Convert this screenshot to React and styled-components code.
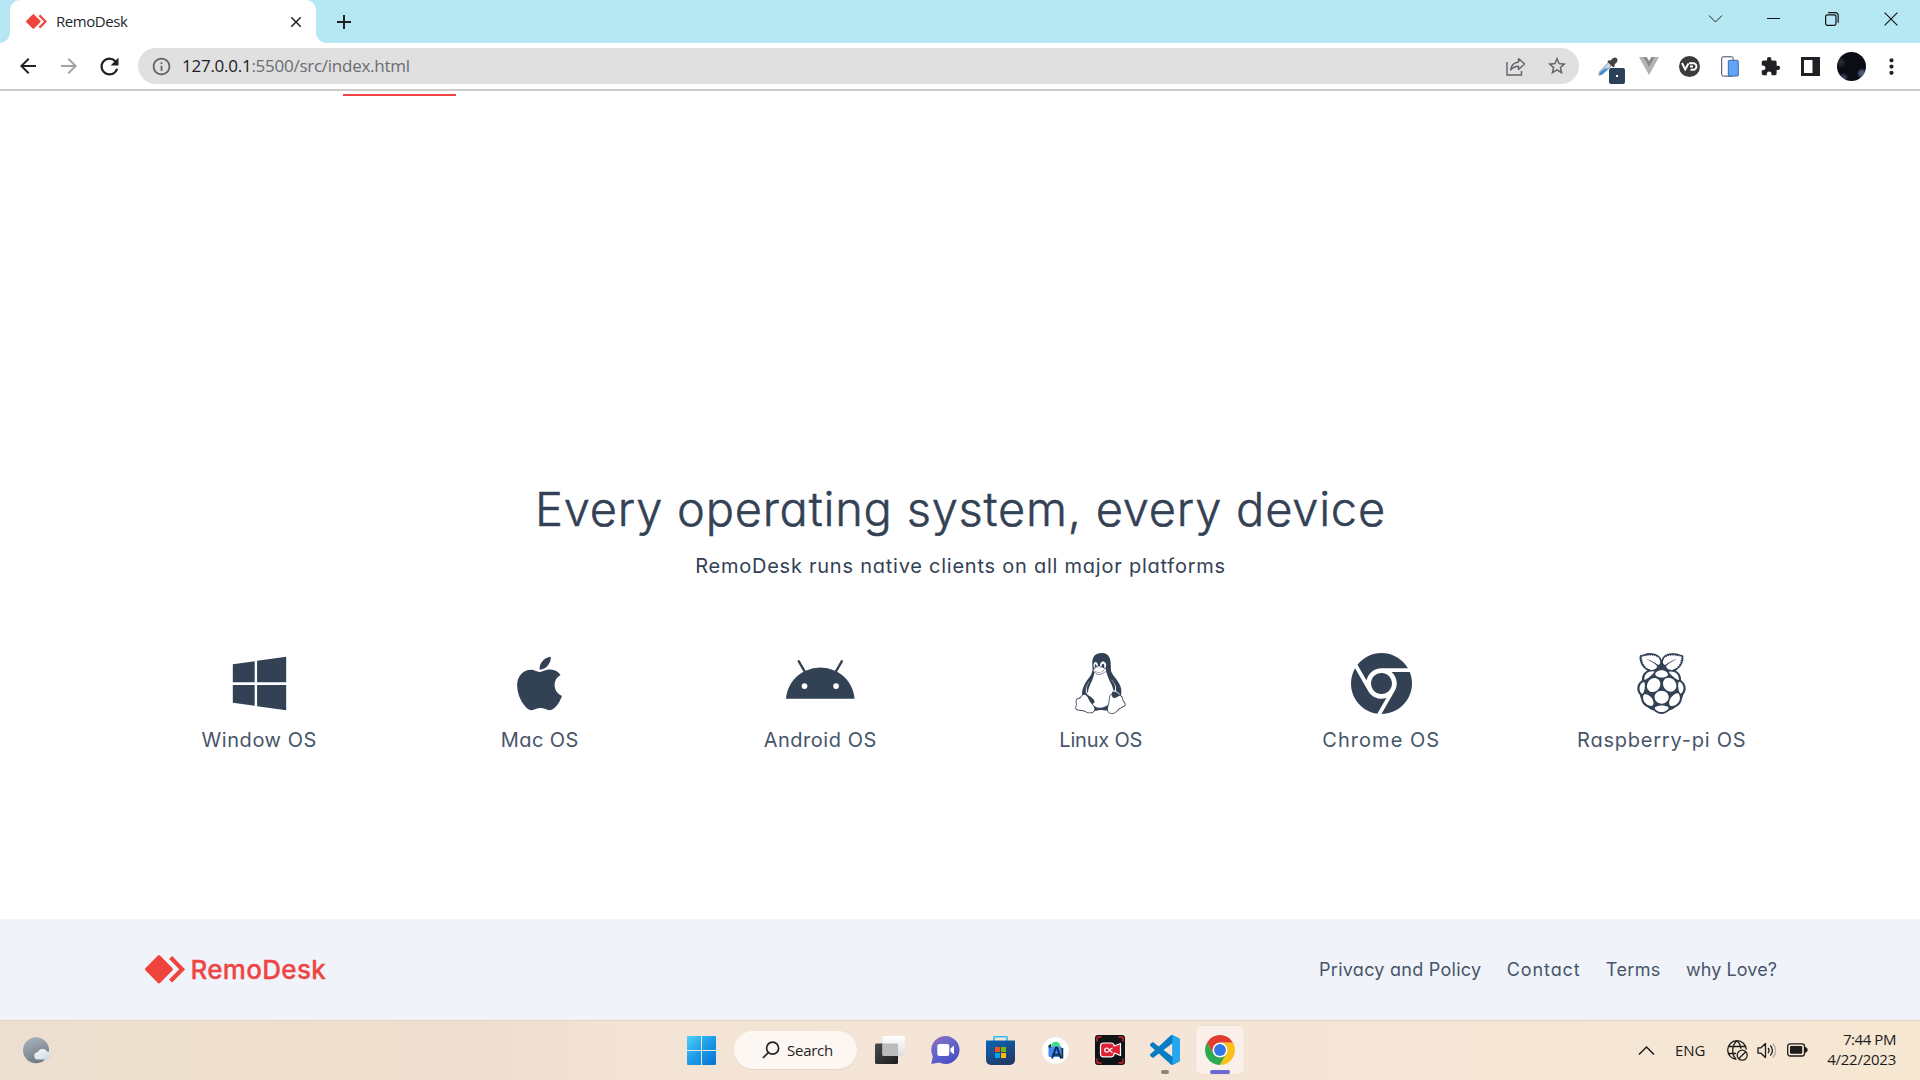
import React from "react";
import styled, { createGlobalStyle } from "styled-components";
import { FaWindows, FaApple, FaAndroid, FaLinux, FaChrome, FaRaspberryPi } from "react-icons/fa6";
import { MdArrowBack, MdArrowForward, MdRefresh, MdInfoOutline, MdStarBorder, MdExtension, MdMoreVert, MdClose, MdAdd } from "react-icons/md";

const GlobalStyle = createGlobalStyle`
  * { box-sizing: border-box; }
  body { margin: 0; background: #fff; }
  svg { display: block; flex: none; }
`;

const SYSTEM = `"Open Sans", "Noto Sans", sans-serif`;
const BRAND = `Inter, "Open Sans", sans-serif`;

const Screen = styled.div`
  width: 1920px;
  height: 1080px;
  display: flex;
  flex-direction: column;
  overflow: hidden;
  font-family: ${SYSTEM};
`;

/* ---------- browser chrome ---------- */
const TabStrip = styled.header`
  height: 43px;
  display: flex;
  background: #b5e8f3;
`;
const Tab = styled.div`
  position: relative;
  width: 306px;
  margin-left: 10px;
  padding: 0 11px 0 16px;
  display: flex;
  align-items: center;
  background: #fff;
  border-radius: 10px 10px 0 0;
  &::before, &::after {
    content: "";
    position: absolute;
    bottom: 0;
    width: 10px;
    height: 10px;
  }
  &::before { left: -10px; background: radial-gradient(circle at 0 0, transparent 9.5px, #fff 10px); }
  &::after { right: -10px; background: radial-gradient(circle at 100% 0, transparent 9.5px, #fff 10px); }
`;
const TabTitle = styled.span`
  flex: 1;
  margin-left: 9px;
  padding-bottom: 2px;
  font-size: 15px;
  line-height: 20px;
  letter-spacing: -0.43px;
  color: #23272b;
`;
const NewTab = styled.div`
  width: 56px;
  display: flex;
  align-items: center;
  justify-content: center;
`;
const WindowButtons = styled.div`
  margin-left: auto;
  height: 37px;
  display: flex;
`;
const WindowButton = styled.div`
  width: 58.5px;
  display: flex;
  align-items: center;
  justify-content: center;
`;
const Toolbar = styled.div`
  height: 48px;
  display: flex;
  align-items: center;
  border-bottom: 2px solid #cbcbcb;
  background: #fff;
`;
const NavButtons = styled.div`
  width: 138px;
  padding-left: 8px;
  display: flex;
`;
const Slot = styled.div`
  position: relative;
  width: 40.5px;
  height: 36px;
  display: flex;
  align-items: center;
  justify-content: center;
  color: ${(p) => p.$tone || "#202124"};
`;
const Omnibox = styled.div`
  width: 1441px;
  height: 36px;
  padding: 0 2px 0 13px;
  display: flex;
  align-items: center;
  border-radius: 18px;
  background: #e0e0e0;
  color: #5f6368;
`;
const Url = styled.span`
  flex: 1;
  margin-left: 10px;
  font-size: 17px;
  line-height: 24px;
  letter-spacing: -0.26px;
  color: #6a6d71;
`;
const Host = styled.span`
  color: #202124;
`;
const Extensions = styled.div`
  margin-left: 9px;
  display: flex;
`;
const Badge = styled.div`
  position: absolute;
  left: 21px;
  top: 20px;
  width: 16px;
  height: 16px;
  display: flex;
  align-items: center;
  justify-content: center;
  border-radius: 2px;
  background: #2b4159;
  &::after { content: ""; width: 2px; height: 2px; background: #fff; }
`;
const Disc = styled.div`
  width: 21px;
  height: 21px;
  display: flex;
  align-items: center;
  justify-content: center;
  border-radius: 50%;
  background: #3b3b3b;
  color: #fff;
`;
const Avatar = styled.div`
  width: 29px;
  height: 29px;
  border-radius: 50%;
  background:
    radial-gradient(circle at 86% 74%, #4b5878 0 7%, transparent 16%),
    radial-gradient(circle at 22% 88%, #343c55 0 6%, transparent 14%),
    radial-gradient(circle at 12% 36%, #262838 0 6%, transparent 18%),
    #0c0c14;
`;

/* ---------- web page ---------- */
const Page = styled.main`
  height: 828px;
  display: flex;
  flex-direction: column;
  font-family: ${BRAND};
  font-feature-settings: "cv11";
  color: #334155;
`;
const ActiveLine = styled.div`
  width: 113px;
  height: 2px;
  margin: 3px 0 0 343px;
  flex: none;
  background: #ef4444;
`;
const Systems = styled.section`
  margin-top: 377px;
  padding-left: 1px;
  display: flex;
  flex-direction: column;
  align-items: center;
`;
const Heading = styled.h1`
  margin: 0;
  font-size: 47px;
  font-weight: 300;
  line-height: 72px;
  letter-spacing: 0.76px;
  -webkit-text-stroke: 0.5px #334155;
`;
const Lead = styled.p`
  margin: 6px 0 0;
  font-size: 20px;
  font-weight: 380;
  line-height: 30px;
  letter-spacing: 0.76px;
`;
const SystemGrid = styled.div`
  width: 1683px;
  margin-top: 72px;
  display: grid;
  grid-template-columns: repeat(6, 1fr);
`;
const SystemCard = styled.div`
  display: flex;
  flex-direction: column;
  align-items: center;
  svg { width: ${(p) => p.$iconWidth || 61}px; height: 61px; }
`;
const SystemName = styled.span`
  margin-top: 11px;
  font-size: 20px;
  font-weight: 370;
  line-height: 30px;
  letter-spacing: ${(p) => p.$track}px;
  color: #475569;
`;
const Footer = styled.footer`
  height: 101px;
  padding: 0 143px 0 145px;
  display: flex;
  align-items: center;
  justify-content: space-between;
  background: #f0f3f9;
  font-family: ${BRAND};
  font-feature-settings: "cv11";
`;
const Brand = styled.div`
  display: flex;
  align-items: center;
  gap: 5.5px;
  color: #ef4444;
`;
const BrandName = styled.span`
  font-size: 26px;
  font-weight: 500;
  line-height: 36px;
  letter-spacing: 0.3px;
  -webkit-text-stroke: 0.3px #ef4444;
`;
const Links = styled.nav`
  display: flex;
  gap: 25.2px;
`;
const Link = styled.a`
  font-size: 18px;
  font-weight: 370;
  line-height: 28px;
  letter-spacing: ${(p) => p.$track}px;
  color: #475569;
`;

/* ---------- taskbar ---------- */
const Taskbar = styled.div`
  height: 60px;
  padding-bottom: 1px;
  display: grid;
  grid-template-columns: 677.5px auto 1fr;
  border-top: 1px solid #e3d3c2;
  background: linear-gradient(90deg, #eddfd0 0, #efe0cd 230px, #eddecf 470px, #f4e4d5 640px, #f4e5d6 1300px, #f6e6d5 1640px, #f6e7d2 1920px);
`;
const Weather = styled.div`
  padding-left: 23px;
  display: flex;
  align-items: center;
`;
const Apps = styled.div`
  display: flex;
  align-items: center;
  gap: 7px;
`;
const AppButton = styled.div`
  position: relative;
  width: 48px;
  height: 48px;
  display: flex;
  align-items: center;
  justify-content: center;
  border-radius: 5px;
  background: ${(p) => (p.$active ? "#faf0e9" : "transparent")};
  box-shadow: ${(p) => (p.$active ? "0 0 0 1px #eedfd1" : "none")};
`;
const Indicator = styled.div`
  position: absolute;
  left: 50%;
  bottom: 0;
  width: ${(p) => p.$width}px;
  height: 4px;
  margin-left: -${(p) => p.$width / 2}px;
  border-radius: 2px;
  background: ${(p) => p.$tone};
`;
const SearchPill = styled.div`
  width: 123px;
  height: 38px;
  padding-left: 28px;
  margin: 0 2px 0 1.5px;
  display: flex;
  align-items: center;
  gap: 7px;
  border-radius: 19px;
  background: #fcf7f2;
  box-shadow: 0 1px 1px #e4d6c7;
`;
const SearchLabel = styled.span`
  padding-bottom: 1px;
  font-size: 15px;
  line-height: 20px;
  letter-spacing: -0.26px;
  color: #1f1f1f;
`;
const Tray = styled.div`
  padding-right: 24px;
  display: flex;
  align-items: center;
  justify-content: flex-end;
  color: #1b1b1b;
`;
const TrayIcons = styled.div`
  margin: 0 19px 0 22px;
  display: flex;
  align-items: center;
  gap: 9px;
`;
const Language = styled.span`
  margin-left: 20px;
  padding-bottom: 1px;
  font-size: 15px;
  line-height: 20px;
  letter-spacing: -0.1px;
`;
const Clock = styled.div`
  padding-bottom: 3px;
  display: flex;
  flex-direction: column;
  align-items: flex-end;
  font-size: 15px;
  line-height: 20px;
`;
const ClockLine = styled.span`
  letter-spacing: ${(p) => p.$track}px;
`;

/* ---------- drawings ---------- */
const Logo = ({ width, height }) => (
  <svg width={width} height={height} viewBox="0 0 40 28.6" fill="#ef443b">
    <path d="M12.7.8a1.8 1.8 0 0 1 2.6 0l12 12.2a1.8 1.8 0 0 1 0 2.6l-12 12.2a1.8 1.8 0 0 1-2.6 0L.6 15.6a1.8 1.8 0 0 1 0-2.6Z" />
    <path d="M25.6 2.6 37.2 14.3 25.6 26" fill="none" stroke="#ef443b" strokeWidth="4.2" />
  </svg>
);
const ChevronDown = () => (
  <svg width="15" height="10" viewBox="0 0 15 10" fill="none" stroke="#222" strokeWidth="1"><path d="m1 1.5 6.5 6.5L14 1.5" /></svg>
);
const Minimize = () => (
  <svg width="13" height="13" viewBox="0 0 13 13"><path d="M0 6.5h13" stroke="#111" strokeWidth="1" /></svg>
);
const Restore = () => (
  <svg width="14" height="14" viewBox="0 0 14 14" fill="none" stroke="#111" strokeWidth="1.2">
    <rect x=".6" y="2.9" width="10.4" height="10.4" rx="1.8" /><path d="M3.2.7h7.2a2.8 2.8 0 0 1 2.8 2.8v7.2" />
  </svg>
);
const CloseWindow = () => (
  <svg width="14" height="14" viewBox="0 0 14 14"><path d="m.6.6 12.8 12.8M13.4.6.6 13.4" stroke="#111" strokeWidth="1.1" /></svg>
);
const Share = () => (
  <svg width="20" height="19" viewBox="0 0 20 19" fill="none" stroke="#5f6368" strokeWidth="1.4">
    <path d="M1 5v13h14.5v-4" /><path d="M12.5 1.6 18.6 7l-6.1 5.4V9.2C9 9.2 6.5 10.5 4.6 13c.5-4.4 3.2-7.4 7.9-8Z" strokeLinejoin="round" />
  </svg>
);
const Eyedropper = () => (
  <svg width="20" height="19" viewBox="0 0 20 19">
    <path d="M10.5 5.5 13.5 8.500 4.500 17.200.8 18.300 1.800 14.600Z" fill="#c9d8e4" stroke="#8b8f94" strokeWidth=".9" />
    <path d="M7 11.400h3.300L4.300 17l-2.900.9.900-2.900Z" fill="#2f8de4" />
    <path d="m9.200 4.600 1.600-1.400 2 .4C14.500.6 17-.2 18.800 1.200c1.500 1.800.6 4.300-2.200 6l.2 1.900-1.500 1.500Z" fill="#444" />
  </svg>
);
const Vue = () => (
  <svg width="20" height="18" viewBox="0 0 20 18"><path d="M0 0h4l6 10.500L16 0h4L10 18Z" fill="#b3b3b3" /><path d="M4 0h3.700L10 4l2.300-4H16l-6 10.500Z" fill="#8b8b8b" /></svg>
);
const DownloaderMark = () => (
  <svg width="17" height="9" viewBox="0 0 17 9" fill="none" stroke="#fff" strokeWidth="1.900"><path d="m1 1 3.200 6.500L7.500 1.500M8 1.200h4.200a3.200 3.200 0 0 1 0 6.500H9.500M9 4.500h3" /></svg>
);
const Devices = () => (
  <svg width="18" height="21" viewBox="0 0 18 21"><rect x=".7" y=".8" width="11.500" height="19.300" rx="1.500" fill="#fff" stroke="#3d4763" strokeWidth="1" /><rect x="7.300" y="4.300" width="10" height="15.800" rx="1" fill="#5ea4f8" stroke="#3b5a92" strokeWidth=".9" /></svg>
);
const SidePanel = () => (
  <svg width="19" height="19" viewBox="0 0 19 19"><path d="M0 0h19v19H0Z" fill="#202124" /><path d="M3 3h8.500v13H3Z" fill="#fff" /></svg>
);
const WeatherIcon = () => (
  <svg width="29" height="27" viewBox="0 0 29 27">
    <defs>
      <linearGradient id="moon" x1="0" y1="0" x2=".4" y2="1"><stop stopColor="#acb6c1" /><stop offset="1" stopColor="#747d86" /></linearGradient>
      <linearGradient id="cloud" x1="0" y1="0" x2="1" y2="1"><stop stopColor="#f7f9fb" /><stop offset="1" stopColor="#ccd7e0" /></linearGradient>
    </defs>
    <circle cx="13" cy="13.300" r="13" fill="url(#moon)" />
    <path d="M15 22.500a3.600 3.600 0 0 1-.2-7.200 5.200 5.200 0 0 1 9.300-.9 4.100 4.100 0 0 1 .5 8.100Z" fill="url(#cloud)" />
  </svg>
);
const StartIcon = () => (
  <svg width="29" height="29" viewBox="0 0 29 29">
    <defs><linearGradient id="start" x1="0" y1="0" x2="1" y2="1"><stop stopColor="#4fd0fb" /><stop offset=".5" stopColor="#1c9be8" /><stop offset="1" stopColor="#0574d1" /></linearGradient></defs>
    <path d="M1 0h13v14H0V1a1 1 0 0 1 1-1ZM15 0h13a1 1 0 0 1 1 1v13H15ZM0 15h14v14H1a1 1 0 0 1-1-1ZM15 15h14v13a1 1 0 0 1-1 1H15Z" fill="url(#start)" />
  </svg>
);
const SearchIcon = () => (
  <svg width="18" height="18" viewBox="0 0 18 18" fill="none" stroke="#222" strokeWidth="1.700"><circle cx="10.600" cy="7.200" r="6" /><path d="M6.300 11.600.9 17" /></svg>
);
const TaskView = () => (
  <svg width="30" height="28" viewBox="0 0 30 28">
    <defs>
      <linearGradient id="tvDark" x1="0" y1="0" x2="1" y2="1"><stop stopColor="#4a4a4a" /><stop offset="1" stopColor="#1d1d1d" /></linearGradient>
      <linearGradient id="tvLight" x1="0" y1="0" x2="0" y2="1"><stop stopColor="#fff" /><stop offset="1" stopColor="#dedede" /></linearGradient>
    </defs>
    <rect y="7.500" width="23" height="20.500" rx="1.500" fill="url(#tvDark)" />
    <rect x="7.500" width="22.500" height="20" rx="1.500" fill="url(#tvLight)" />
    <path d="M7.500 7.500H23V20H9a1.500 1.500 0 0 1-1.500-1.500Z" fill="#bcbcbc" />
  </svg>
);
const Chat = () => (
  <svg width="29" height="28" viewBox="0 0 29 28">
    <defs><linearGradient id="chat" x1="0" y1="0" x2=".6" y2="1"><stop stopColor="#9a6bb5" /><stop offset=".4" stopColor="#6a6ac9" /><stop offset="1" stopColor="#4a50c8" /></linearGradient></defs>
    <path d="M14.500 0a14 14 0 1 1-6.300 26.500L.3 28l1.500-7.600A14 14 0 0 1 14.500 0Z" fill="url(#chat)" />
    <rect x="6.300" y="8" width="12" height="12" rx="2" fill="#fff" /><path d="m19.500 12.500 3.500-3v9l-3.500-3Z" fill="#fff" />
  </svg>
);
const Store = () => (
  <svg width="29" height="29" viewBox="0 0 29 29">
    <defs><linearGradient id="store" x1="0" y1="0" x2=".5" y2="1"><stop stopColor="#0a66b4" /><stop offset="1" stopColor="#213b6c" /></linearGradient></defs>
    <path d="M8 5.500V1.600a1 1 0 0 1 1-1h11a1 1 0 0 1 1 1v3.900" fill="none" stroke="#2fbdf0" strokeWidth="1.700" />
    <path d="M0 4.500h29V24a5 5 0 0 1-5 5H5a5 5 0 0 1-5-5Z" fill="url(#store)" />
    <path d="M9 11h5v5H9Z" fill="#f25022" /><path d="M15 11h5v5h-5Z" fill="#7fba00" /><path d="M9 17h5v5H9Z" fill="#00a4ef" /><path d="M15 17h5v5h-5Z" fill="#ffb900" />
  </svg>
);
const StudioIcon = () => (
  <svg width="27" height="27" viewBox="0 0 27 27">
    <circle cx="13.500" cy="13.500" r="13.300" fill="#fff" />
    <path d="M9 9.500a4.700 4.700 0 0 1 9.400 0Z" fill="#3ddc84" /><path d="M6.500 9.500 9 7v2.500h10.500v10.500H8a1.500 1.500 0 0 1-1.500-1.500Z" fill="#4285f4" />
    <path d="M10 21.500 14 10.500h1l4 11M12 17.800h5M20.300 11v10.500" fill="none" stroke="#0b2f4a" strokeWidth="1.900" /><path d="M6.500 10.500V8.500L9 7v3.500Z" fill="#0b3345" />
  </svg>
);
const Recorder = () => (
  <svg width="30" height="30" viewBox="0 0 30 30">
    <rect width="30" height="30" rx="3" fill="#111416" />
    <path d="M2 6.500V3.500Q2 2 3.500 2h3M23.500 2h3Q28 2 28 3.500v3M28 23.500v3q0 1.500-1.500 1.500h-3M6.500 28h-3Q2 28 2 26.500v-3" fill="none" stroke="#e0262c" strokeWidth="1.400" />
    <path d="M8.500 8h7.500q3 0 3.200 3l6.300-2.500v12L19.200 18q0 3.800-3.200 3.800H8.500Q5.500 21.800 5.500 19v-8Q5.500 8 8.500 8Z" fill="#de2236" stroke="#fff" strokeWidth="1.200" strokeLinejoin="round" />
    <path d="M17.500 17.300c-2.500-.6-3.300-4.300-5.700-4.300a2.100 2.100 0 0 0 0 4.200c2.400 0 3-3.600 5.700-4" fill="none" stroke="#fff" strokeWidth="1.200" />
  </svg>
);
const CodeIcon = () => (
  <svg width="30" height="30" viewBox="0 0 100 100">
    <path fillRule="evenodd" d="M96.460 10.800 75.860.88a6.230 6.230 0 0 0-7.100 1.200L29.350 38.040 12.190 25.010a4.160 4.160 0 0 0-5.320.24L1.360 30.260a4.170 4.170 0 0 0 0 6.160L16.250 50 1.360 63.580a4.170 4.170 0 0 0 0 6.160l5.500 5.010a4.160 4.160 0 0 0 5.330.24l17.160-13.030L68.760 97.900a6.220 6.220 0 0 0 7.100 1.200l20.600-9.900A6.250 6.250 0 0 0 100 83.600V16.400a6.250 6.250 0 0 0-3.540-5.600ZM75.020 72.700 45.110 50l29.910-22.700Z" fill="#0a7cc4" />
    <path d="M75.800.9 96.500 10.800A6.200 6.200 0 0 1 100 16.400V83.600a6.200 6.200 0 0 1-3.500 5.600L75.800 99.100c-2 1-5 .6-6.800-1 3 1.800 6 0 6-3.600V5.500c0-3.600-3-5.400-6-3.600 1.800-1.600 4.800-2 6.800-1Z" fill="#25a7f0" />
  </svg>
);
const ChromeColor = () => (
  <svg width="30" height="30" viewBox="0 0 48 48">
    <path d="M13.600 18 34.400 30 24 48A24 24 0 0 1 3.220 12l10.400 18Z" fill="#2da94f" />
    <path d="M24 12h20.780A24 24 0 0 1 24 48l10.400-18Z" fill="#fbc116" />
    <path d="M3.220 12A24 24 0 0 1 44.780 12H24L13.600 30Z" fill="#e33b2e" />
    <circle cx="24" cy="24" r="12" fill="#fff" /><circle cx="24" cy="24" r="9.500" fill="#2f78e6" />
  </svg>
);
const ChevronUp = () => (
  <svg width="17" height="11" viewBox="0 0 17 11" fill="none" stroke="#1b1b1b" strokeWidth="1.500"><path d="m1 9.500 7.500-7.500L16 9.500" /></svg>
);
const GlobeOff = () => (
  <svg width="21" height="21" viewBox="0 0 21 21" fill="none" stroke="#1b1b1b" strokeWidth="1.300">
    <path d="M9.500 19.300A9.300 9.300 0 1 1 19.300 9.500M9 19c-4.500-4-4.500-14 1-18.300 2.200 1.800 3.600 4.800 3.900 8M1.500 6.500h17M1 13.500h8" />
    <circle cx="15.200" cy="15.200" r="5" /><path d="m11.700 18.700 7-7" />
  </svg>
);
const Speaker = () => (
  <svg width="21" height="17" viewBox="0 0 21 17" fill="none" stroke="#1b1b1b" strokeWidth="1.300">
    <path d="M1 5.800h3L8.500 1.500v14L4 11.200H1Z" strokeLinejoin="round" /><path d="M11 6a3.500 3.500 0 0 1 0 5M13.300 3.500a7 7 0 0 1 0 10" /><path d="M15.800 1.500a10 10 0 0 1 0 14" stroke="#b5aa9d" />
  </svg>
);
const Battery = () => (
  <svg width="21" height="14" viewBox="0 0 21 14"><rect x=".7" y=".8" width="16.800" height="12.200" rx="2.500" fill="none" stroke="#1b1b1b" strokeWidth="1.300" /><rect x="3" y="3" width="12.200" height="7.800" rx="1" fill="#1b1b1b" /><path d="M18.500 4.500q1.700.3 1.700 2.400t-1.700 2.400Z" fill="#1b1b1b" stroke="#1b1b1b" /></svg>
);

const SYSTEMS = [
  { name: "Window OS", Icon: FaWindows, track: 0.57 },
  { name: "Mac OS", Icon: FaApple, track: 0.4 },
  { name: "Android OS", Icon: FaAndroid, track: 0.53, iconWidth: 68.6 },
  { name: "Linux OS", Icon: FaLinux, track: -0.2 },
  { name: "Chrome OS", Icon: FaChrome, track: 1.05 },
  { name: "Raspberry-pi OS", Icon: FaRaspberryPi, track: 0.77 },
];
const LINKS = [
  { label: "Privacy and Policy", track: 0.27 },
  { label: "Contact", track: 0.93 },
  { label: "Terms", track: 0.37 },
  { label: "why Love?", track: 0.08 },
];
const RUNNING = [
  { id: "tasks", Icon: TaskView },
  { id: "chat", Icon: Chat },
  { id: "store", Icon: Store },
  { id: "studio", Icon: StudioIcon },
  { id: "recorder", Icon: Recorder },
  { id: "code", Icon: CodeIcon, mark: { width: 8, tone: "#8b8178" } },
  { id: "browser", Icon: ChromeColor, active: true, mark: { width: 20, tone: "#6c69d4" } },
];

export default function App() {
  return (
    <Screen>
      <GlobalStyle />
      <TabStrip>
        <Tab>
          <Logo width={21} height={15} />
          <TabTitle>RemoDesk</TabTitle>
          <MdClose size={18} color="#202124" />
        </Tab>
        <NewTab><MdAdd size={24} color="#202124" /></NewTab>
        <WindowButtons>
          <WindowButton><ChevronDown /></WindowButton>
          <WindowButton><Minimize /></WindowButton>
          <WindowButton><Restore /></WindowButton>
          <WindowButton><CloseWindow /></WindowButton>
        </WindowButtons>
      </TabStrip>
      <Toolbar>
        <NavButtons>
          <Slot><MdArrowBack size={24} /></Slot>
          <Slot $tone="#a0a2a4"><MdArrowForward size={24} /></Slot>
          <Slot><MdRefresh size={27} /></Slot>
        </NavButtons>
        <Omnibox>
          <MdInfoOutline size={21} />
          <Url><Host>127.0.0.1</Host>:5500/src/index.html</Url>
          <Slot><Share /></Slot>
          <Slot $tone="#5f6368"><MdStarBorder size={22} /></Slot>
        </Omnibox>
        <Extensions>
          <Slot><Eyedropper /><Badge /></Slot>
          <Slot><Vue /></Slot>
          <Slot><Disc><DownloaderMark /></Disc></Slot>
          <Slot><Devices /></Slot>
          <Slot><MdExtension size={21} /></Slot>
          <Slot><SidePanel /></Slot>
          <Slot><Avatar /></Slot>
          <Slot><MdMoreVert size={25} /></Slot>
        </Extensions>
      </Toolbar>
      <Page>
        <ActiveLine />
        <Systems>
          <Heading>Every operating system, every device</Heading>
          <Lead>RemoDesk runs native clients on all major platforms</Lead>
          <SystemGrid>
            {SYSTEMS.map(({ name, Icon, track, iconWidth }) => (
              <SystemCard key={name} $iconWidth={iconWidth}>
                <Icon />
                <SystemName $track={track}>{name}</SystemName>
              </SystemCard>
            ))}
          </SystemGrid>
        </Systems>
      </Page>
      <Footer>
        <Brand>
          <Logo width={40} height={28.6} />
          <BrandName>RemoDesk</BrandName>
        </Brand>
        <Links>
          {LINKS.map(({ label, track }) => <Link key={label} $track={track}>{label}</Link>)}
        </Links>
      </Footer>
      <Taskbar>
        <Weather><WeatherIcon /></Weather>
        <Apps>
          <AppButton><StartIcon /></AppButton>
          <SearchPill><SearchIcon /><SearchLabel>Search</SearchLabel></SearchPill>
          {RUNNING.map(({ id, Icon, active, mark }) => (
            <AppButton key={id} $active={active}>
              <Icon />
              {mark && <Indicator $width={mark.width} $tone={mark.tone} />}
            </AppButton>
          ))}
        </Apps>
        <Tray>
          <ChevronUp />
          <Language>ENG</Language>
          <TrayIcons><GlobeOff /><Speaker /><Battery /></TrayIcons>
          <Clock>
            <ClockLine $track={-0.43}>7:44 PM</ClockLine>
            <ClockLine $track={-0.25}>4/22/2023</ClockLine>
          </Clock>
        </Tray>
      </Taskbar>
    </Screen>
  );
}
